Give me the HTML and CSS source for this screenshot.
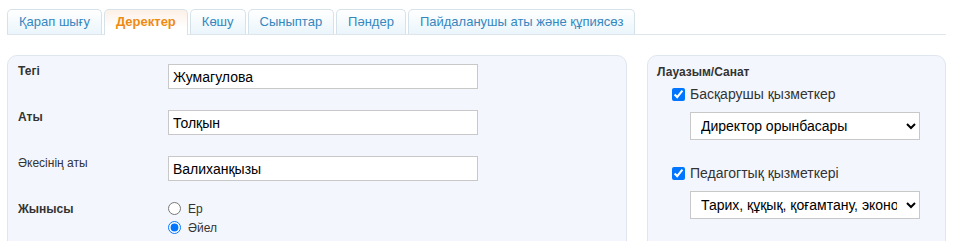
FILE: index.html
```html
<!DOCTYPE html>
<html lang="kk">
<head>
<meta charset="utf-8">
<title>Деректер</title>
<link rel="stylesheet" href="styles.css">
</head>
<body>
<div class="tabs">
  <a class="tab">Қарап шығу</a>
  <a class="tab active">Деректер</a>
  <a class="tab">Көшу</a>
  <a class="tab">Сыныптар</a>
  <a class="tab">Пәндер</a>
  <a class="tab">Пайдаланушы аты және құпиясөз</a>
</div>
<div class="content">
  <div class="panel main">
    <div class="row">
      <div class="label bold">Тегі</div>
      <div class="field"><input class="text" type="text" value="Жумагулова"></div>
    </div>
    <div class="row">
      <div class="label bold">Аты</div>
      <div class="field"><input class="text" type="text" value="Толқын"></div>
    </div>
    <div class="row">
      <div class="label">Әкесінің аты</div>
      <div class="field"><input class="text" type="text" value="Валиханқызы"></div>
    </div>
    <div class="row">
      <div class="label bold gender">Жынысы</div>
      <div class="field radios">
        <label class="radio"><input type="radio" name="g"> Ер</label>
        <label class="radio"><input type="radio" name="g" checked> Әйел</label>
      </div>
    </div>
  </div>
  <div class="panel side">
    <div class="side-title">Лауазым/Санат</div>
    <label class="check"><input type="checkbox" checked> Басқарушы қызметкер</label>
    <select class="sel"><option>Директор орынбасары</option></select>
    <label class="check second"><input type="checkbox" checked> Педагогтық қызметкері</label>
    <select class="sel"><option>Тарих, құқық, қоғамтану, экономика</option></select>
  </div>
</div>
</body>
</html>
```
FILE: styles.css
```css
html, body {
  margin: 0;
  background: #ffffff;
}
body {
  padding: 9px 8px 0 7px;
  font-family: "Liberation Sans", Arial, sans-serif;
  color: #333333;
  overflow: hidden;
}
.tabs {
  display: flex;
  gap: 2px;
  border-bottom: 1px solid #dde6ec;
  height: 25px;
}
.tab {
  display: block;
  height: 24px;
  line-height: 24px;
  padding: 0 11px;
  font-size: 13px;
  color: #3587bf;
  border: 1px solid #d6e2ea;
  border-bottom: none;
  border-radius: 5px 5px 0 0;
  background: linear-gradient(#ffffff, #eaf5fb);
  box-sizing: content-box;
}
.tab.active {
  color: #ef8a12;
  font-weight: bold;
  background: linear-gradient(#fdf0e6, #ffffff 70%);
  height: 25px;
  margin-bottom: -1px;
}
.content {
  display: flex;
  gap: 20px;
  margin-top: 20px;
}
.panel {
  background: #f3f7fd;
  border: 1px solid #dfe6ee;
  border-radius: 10px;
  box-sizing: border-box;
  height: 250px;
}
.main {
  width: 620px;
  padding: 8px 10px 0 10px;
}
.side {
  width: 299px;
  padding: 8px 10px 0 9px;
}
.row {
  display: flex;
  margin-bottom: 21px;
}
.label {
  width: 150px;
  font-size: 12px;
  padding-top: 0;
  line-height: 14px;
}
.label.bold {
  font-weight: bold;
}
.text {
  display: block;
  width: 310px;
  height: 25px;
  box-sizing: border-box;
  border: 1px solid #c8c8c8;
  border-radius: 0;
  padding: 0 4px;
  margin: 0;
  font-family: "Liberation Sans", Arial, sans-serif;
  font-size: 14px;
  color: #000;
  background: #fff;
}
.radios {
  display: flex;
  flex-direction: column;
  margin-top: -3px;
}
.radio {
  display: flex;
  align-items: center;
  font-size: 12px;
  height: 19px;
  gap: 4px;
}
.radio input {
  margin: 0 3px 0 0;
  width: 13px;
  height: 13px;
}
.side-title {
  font-size: 12px;
  font-weight: bold;
  line-height: 14px;
  padding-top: 1px;
}
.check {
  display: flex;
  align-items: center;
  font-size: 14px;
  height: 18px;
  margin: 6px 0 0 15px;
}
.check input {
  margin: 0 5px 0 0;
  width: 13px;
  height: 13px;
}
.check.second {
  margin-top: 24px;
}
.sel {
  display: block;
  width: 230px;
  height: 28px;
  margin: 9px 0 0 33px;
  border: 1px solid #c8c8c8;
  border-radius: 0;
  background: #fff;
  font-family: "Liberation Sans", Arial, sans-serif;
  font-size: 14px;
  color: #000;
  padding: 0 6px;
}
```
